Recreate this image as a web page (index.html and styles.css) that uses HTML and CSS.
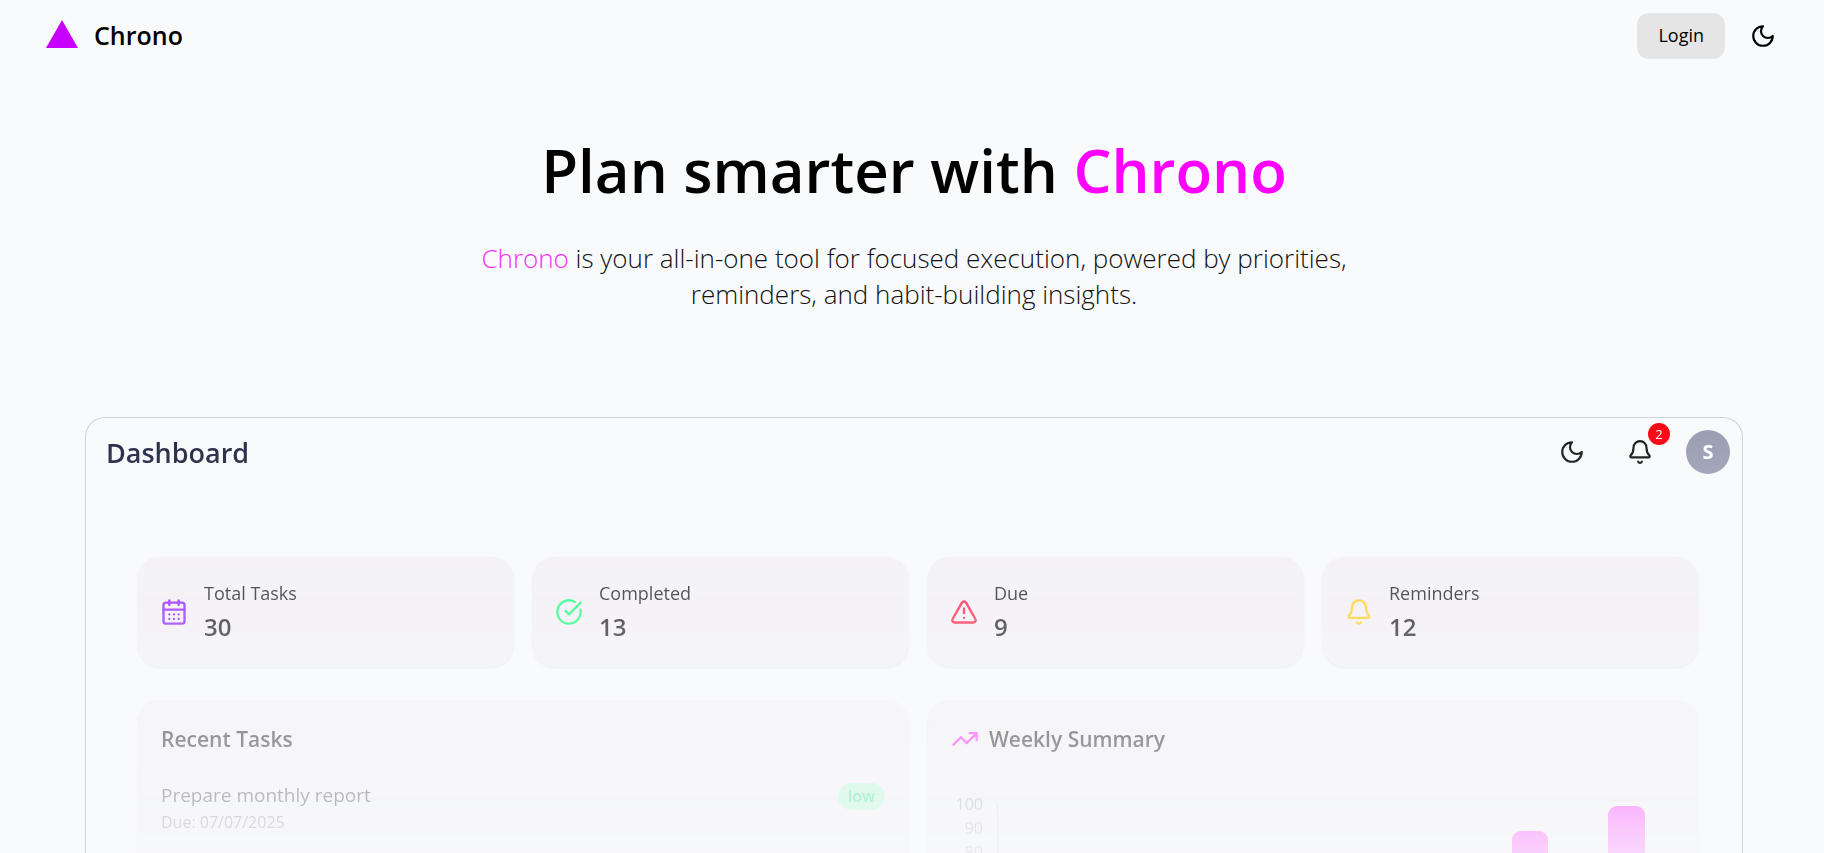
FILE: index.html
```html
<!DOCTYPE html>
<html lang="en">
<head>
<meta charset="utf-8">
<meta name="viewport" content="width=device-width, initial-scale=1">
<title>Chrono</title>
<link rel="stylesheet" href="styles.css">
</head>
<body>
<header class="topbar">
  <a class="brand" href="#">
    <svg class="brand-mark" viewBox="0 0 32 28" aria-hidden="true"><path d="M16 0 32 28H0Z"/></svg>
    <span>Chrono</span>
  </a>
  <div class="topbar-actions">
    <button class="login" type="button">Login</button>
    <button class="icon-button" type="button" aria-label="Toggle theme">
      <svg class="icon" viewBox="0 0 24 24" aria-hidden="true"><path d="M12 3a6 6 0 0 0 9 9 9 9 0 1 1-9-9Z"/></svg>
    </button>
  </div>
</header>
<main class="page">
  <section class="hero">
    <h1>Plan smarter with <span class="accent">Chrono</span></h1>
    <p><span class="accent-soft">Chrono</span> is your all-in-one tool for focused execution, powered by priorities,<br>reminders, and habit-building insights.</p>
  </section>
  <section class="preview" aria-label="Dashboard preview">
    <div class="dashboard">
      <div class="dash-head">
        <h2>Dashboard</h2>
        <div class="dash-actions">
          <button class="icon-button" type="button" aria-label="Dark mode">
            <svg class="icon" viewBox="0 0 24 24" aria-hidden="true"><path d="M12 3a6 6 0 0 0 9 9 9 9 0 1 1-9-9Z"/></svg>
          </button>
          <button class="icon-button" type="button" aria-label="Notifications">
            <svg class="icon" viewBox="0 0 24 24" aria-hidden="true"><path d="M10.268 21a2 2 0 0 0 3.464 0M3.262 15.326A1 1 0 0 0 4 17h16a1 1 0 0 0 .74-1.673C19.41 13.956 18 12.499 18 8A6 6 0 0 0 6 8c0 4.499-1.411 5.956-2.738 7.326"/></svg>
            <span class="badge">2</span>
          </button>
          <span class="avatar">S</span>
        </div>
      </div>
      <div class="dash-body">
        <div class="stats">
          <article class="card stat">
            <svg class="icon purple" viewBox="0 0 24 24" aria-hidden="true"><rect x="3" y="4" width="18" height="18" rx="2"/><path d="M8 2v4M16 2v4M3 10h18M8 14h.01M12 14h.01M16 14h.01M8 18h.01M12 18h.01M16 18h.01"/></svg>
            <div><h3>Total Tasks</h3><p>30</p></div>
          </article>
          <article class="card stat">
            <svg class="icon green" viewBox="0 0 24 24" aria-hidden="true"><path d="M21.801 10A10 10 0 1 1 17 3.335M9 11l3 3L22 4"/></svg>
            <div><h3>Completed</h3><p>13</p></div>
          </article>
          <article class="card stat">
            <svg class="icon red" viewBox="0 0 24 24" aria-hidden="true"><path d="m21.73 18-8-14a2 2 0 0 0-3.48 0l-8 14A2 2 0 0 0 4 21h16a2 2 0 0 0 1.730-3M12 9v4M12 17h.01"/></svg>
            <div><h3>Due</h3><p>9</p></div>
          </article>
          <article class="card stat">
            <svg class="icon yellow" viewBox="0 0 24 24" aria-hidden="true"><path d="M10.268 21a2 2 0 0 0 3.464 0M3.262 15.326A1 1 0 0 0 4 17h16a1 1 0 0 0 .74-1.673C19.41 13.956 18 12.499 18 8A6 6 0 0 0 6 8c0 4.499-1.411 5.956-2.738 7.326"/></svg>
            <div><h3>Reminders</h3><p>12</p></div>
          </article>
        </div>
        <div class="panels">
          <section class="card panel">
            <h3>Recent Tasks</h3>
            <ul class="tasks">
              <li>
                <div><p class="task-name">Prepare monthly report</p><p class="task-due">Due: 07/07/2025</p></div>
                <span class="pill">low</span>
              </li>
            </ul>
          </section>
          <section class="card panel">
            <h3><svg class="icon pink" viewBox="0 0 24 24" aria-hidden="true"><path d="M16 7h6v6M22 7l-8.500 8.500-5-5L2 17"/></svg>Weekly Summary</h3>
            <div class="chart">
              <div class="scale"><span>100</span><span>90</span><span>80</span></div>
              <div class="plot">
                <div class="bar bar-sat" style="height: 89%"></div>
                <div class="bar bar-sun" style="height: 99%"></div>
              </div>
            </div>
          </section>
        </div>
      </div>
    </div>
  </section>
</main>
</body>
</html>
```
FILE: styles.css
```css
* { box-sizing: border-box; }
body {
  margin: 0;
  height: 100vh;
  display: flex;
  flex-direction: column;
  overflow: hidden;
  background: #f9fafc;
  color: #000;
  font-family: "Open Sans", "Noto Sans", sans-serif;
}
h1, h2, h3, p, ul { margin: 0; padding: 0; }
button { font: inherit; color: inherit; border: 0; background: none; cursor: pointer; }
.icon {
  display: block;
  width: 26px;
  height: 26px;
  flex: none;
  fill: none;
  stroke: currentColor;
  stroke-width: 2;
  stroke-linecap: round;
  stroke-linejoin: round;
}
.icon-button { position: relative; display: block; padding: 0; }

.topbar {
  display: flex;
  align-items: center;
  justify-content: space-between;
  flex: none;
  height: 72px;
  padding: 0 48px 0 46px;
}
.brand {
  display: flex;
  align-items: center;
  gap: 16px;
  padding-bottom: 2px;
  color: #000;
  font-size: 25px;
  font-weight: 600;
  text-decoration: none;
}
.brand-mark { width: 32px; height: 28px; margin-bottom: 2px; fill: #c800ff; }
.topbar-actions { display: flex; align-items: center; gap: 25px; }
.login {
  height: 46px;
  padding: 0 21px 2px;
  border-radius: 12px;
  background: #e5e5e5;
  font-size: 18px;
}

.page {
  display: flex;
  flex-direction: column;
  flex: 1;
  min-height: 0;
  padding: 0 81px 0 85px;
}
.hero { flex: none; text-align: center; padding: 56px 0 105px; }
.hero h1 { font-size: 60px; line-height: 84px; font-weight: 600; }
.hero p { margin-top: 28px; font-size: 26px; line-height: 36px; font-weight: 300; color: #111; }
.accent { color: #f0f; }
.accent-soft { color: #f22ef5; }

.preview {
  flex: 1;
  min-height: 0;
  overflow: hidden;
  border: 1px solid #d0d2d6;
  border-bottom: 0;
  border-radius: 20px 20px 0 0;
}
.dashboard { mask-image: linear-gradient(#000, transparent 533px); }
.dash-head {
  display: flex;
  align-items: center;
  justify-content: space-between;
  height: 68px;
  padding: 0 12px 0 20px;
}
.dash-head h2 { font-size: 27px; font-weight: 600; color: #1f2440; }
.dash-actions { display: flex; align-items: center; gap: 42px; color: #151515; }
.dash-actions .avatar { margin-left: -9px; }
.badge {
  position: absolute;
  top: -16px;
  right: -17px;
  width: 22px;
  height: 22px;
  border-radius: 50%;
  background: #ff0010;
  color: #fff;
  font-size: 13px;
  line-height: 22px;
  text-align: center;
}
.avatar {
  width: 44px;
  height: 44px;
  border-radius: 50%;
  background: #999cb2;
  color: #fff;
  font-size: 20px;
  font-weight: 700;
  line-height: 44px;
  text-align: center;
}
.dash-body { padding: 71px 44px 40px 52px; }
.card {
  border-radius: 22px;
  background: #f2eff5;
  box-shadow: 0 1px 3px rgba(0, 0, 0, .1);
}
.stats { display: grid; grid-template-columns: repeat(4, 1fr); gap: 20px; }
.stat { display: flex; align-items: center; gap: 16px; height: 110px; padding: 0 22px; }
.stat .icon { width: 28px; height: 28px; }
.stat h3 { font-size: 18px; line-height: 28px; font-weight: 400; }
.stat p { margin-top: 4px; font-size: 24px; line-height: 32px; padding-bottom: 2px; font-weight: 600; }
.purple { color: #8200ff; }
.green { color: #00ff6b; }
.red { color: #ff002a; }
.yellow { color: #ffc900; }
.pink { color: #f0f; }
.panels { display: grid; grid-template-columns: 1fr 1fr; gap: 20px; margin-top: 33px; }
.panel { padding: 24px 23px; }
.panel h3 {
  display: flex;
  align-items: center;
  gap: 10px;
  font-size: 21px;
  line-height: 30px;
  font-weight: 600;
}
.panel h3 .icon { width: 28px; height: 28px; }
.tasks { list-style: none; margin-top: 26px; }
.tasks li {
  display: flex;
  justify-content: space-between;
  align-items: flex-start;
  padding-bottom: 10px;
  border-bottom: 1px solid #e5e5e8;
}
.task-name { font-size: 19px; line-height: 30px; color: #222; }
.task-due { font-size: 16px; line-height: 24px; color: #6b7280; }
.pill {
  margin-top: 3px;
  padding: 0 10px;
  border-radius: 14px;
  background: #a4f8cc;
  color: #05e26b;
  font-size: 16px;
  line-height: 27px;
  font-weight: 600;
}
.chart { display: flex; gap: 14px; margin-top: 38px; }
.scale {
  display: flex;
  flex-direction: column;
  width: 32px;
  text-align: right;
  color: #999;
  font-size: 16px;
  line-height: 24px;
}
.plot {
  display: grid;
  grid-template-columns: repeat(7, 1fr);
  align-items: end;
  justify-items: center;
  flex: 1;
  height: 242px;
  margin-top: 12px;
  border-left: 1px solid #ccc;
}
.bar {
  width: 38%;
  border-radius: 9px 9px 0 0;
  background: linear-gradient(#f0f, rgba(255, 0, 255, .7) 60px, rgba(255, 0, 255, .2));
}
.bar-sat { grid-column: 6; }
.bar-sun { grid-column: 7; }
```
